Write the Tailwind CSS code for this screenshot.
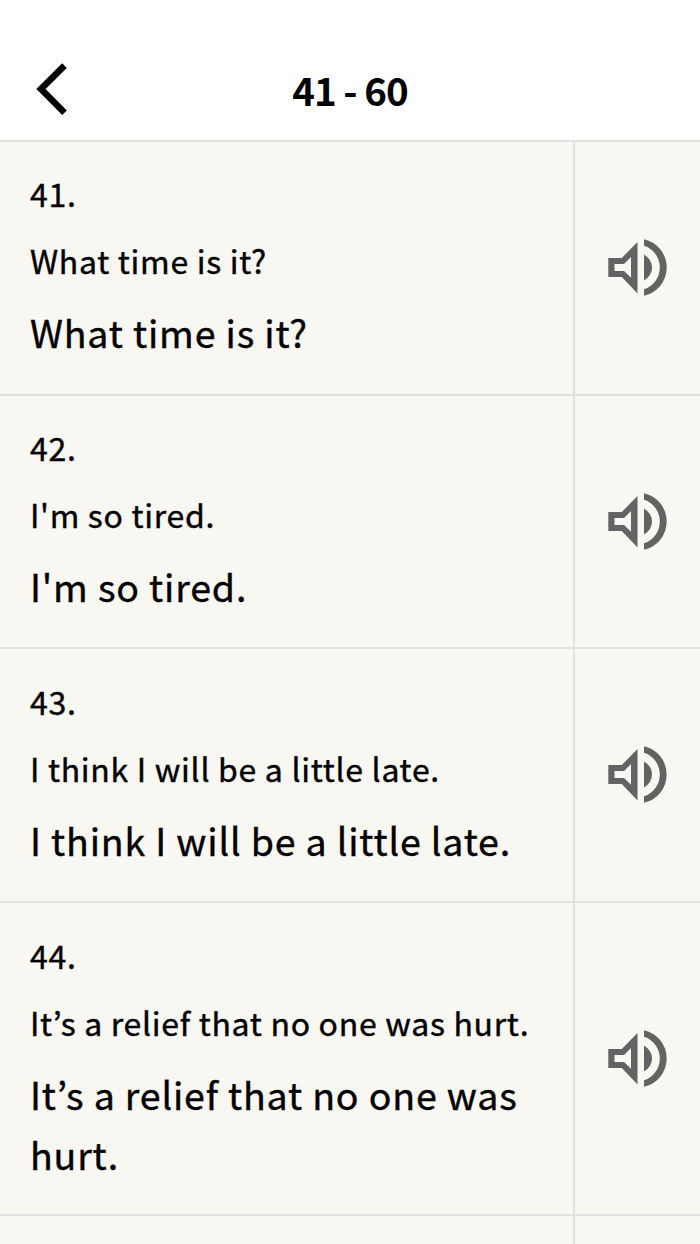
<!DOCTYPE html>
<html lang="en">
<head>
    <meta charset="UTF-8">
    <meta name="viewport" content="width=device-width, initial-scale=1.0">
    <title>41 - 60</title>
    <script src="https://cdn.jsdelivr.net/npm/@tailwindcss/browser@4"></script>
</head>
<body class="h-[1244px] flex flex-col overflow-hidden bg-[#f8f7f2] text-black font-['Noto_Sans_CJK_KR','Noto_Sans_CJK_JP',sans-serif]">
<svg class="hidden">
    <symbol id="speaker" viewBox="0 0 60 58">
        <path fill-rule="evenodd" d="M0.3 19H13.8L29.5 3V54.5L13.8 38H0.3ZM6.5 25V32H16L23 38.7V18L16 25Z"/>
        <path d="M36 15.5Q44 20.5 44 28.5T36 41.5Z"/>
        <path d="M36 0.2A29 29 0 0 1 36 56.8V50.2A22.8 22.8 0 0 0 36 6.8Z"/>
    </symbol>
</svg>
<!-- Header -->
<header class="h-[142px] shrink-0 bg-white border-b-2 border-[#e1e1e1] pt-[38px] grid grid-cols-3 items-center">
    <button class="pl-9" aria-label="Back">
        <svg class="w-8 h-[54px]" viewBox="0 0 32 54" fill="none" stroke="black" stroke-width="6.6">
            <path d="M28.5 3.7L5 27L28.5 50.8"/>
        </svg>
    </button>
    <h1 class="text-center text-[38.5px] leading-[58px] font-bold tracking-[-1px] whitespace-nowrap">41 - 60</h1>
</header>
<!-- Sentences -->
<main class="flex-1 min-h-0 flex flex-col [-webkit-text-stroke:0.4px_black]">
    <section class="flex shrink-0 h-[253.7px] border-b-2 border-[#e1e1e1]">
        <div class="w-[575px] shrink-0 border-r-2 border-[#e1e1e1] pl-[30px] pr-7 pt-[26px]">
            <p class="text-[32px] leading-[50px] tracking-[0.7px]">41.</p>
            <p class="mt-[17px] text-[32px] leading-[50px] tracking-[0.7px]">What time is it?</p>
            <p class="mt-[17px] text-[37.5px] leading-[60px] tracking-[0.84px]">What time is it?</p>
        </div>
        <button class="flex-1 flex items-center justify-center" aria-label="Play"><svg class="w-[60px] h-[58px] fill-[#636363]"><use href="#speaker"/></svg></button>
    </section>
    <section class="flex shrink-0 h-[253.7px] border-b-2 border-[#e1e1e1]">
        <div class="w-[575px] shrink-0 border-r-2 border-[#e1e1e1] pl-[30px] pr-7 pt-[26px]">
            <p class="text-[32px] leading-[50px] tracking-[0.7px]">42.</p>
            <p class="mt-[17px] text-[32px] leading-[50px] tracking-[0.7px]">I'm so tired.</p>
            <p class="mt-[17px] text-[37.5px] leading-[60px] tracking-[0.84px]">I'm so tired.</p>
        </div>
        <button class="flex-1 flex items-center justify-center" aria-label="Play"><svg class="w-[60px] h-[58px] fill-[#636363]"><use href="#speaker"/></svg></button>
    </section>
    <section class="flex shrink-0 h-[253.7px] border-b-2 border-[#e1e1e1]">
        <div class="w-[575px] shrink-0 border-r-2 border-[#e1e1e1] pl-[30px] pr-7 pt-[26.5px]">
            <p class="text-[32px] leading-[50px] tracking-[0.7px]">43.</p>
            <p class="mt-[17px] text-[32px] leading-[50px] tracking-[0.7px]">I think I will be a little late.</p>
            <p class="mt-[17px] text-[37.5px] leading-[60px] tracking-[0.84px]">I think I will be a little late.</p>
        </div>
        <button class="flex-1 flex items-center justify-center" aria-label="Play"><svg class="w-[60px] h-[58px] fill-[#636363]"><use href="#speaker"/></svg></button>
    </section>
    <section class="flex shrink-0 h-[313.4px] border-b-2 border-[#e1e1e1]">
        <div class="w-[575px] shrink-0 border-r-2 border-[#e1e1e1] pl-[30px] pr-7 pt-[26.5px]">
            <p class="text-[32px] leading-[50px] tracking-[0.7px]">44.</p>
            <p class="mt-[17px] text-[32px] leading-[50px] tracking-[0.7px] whitespace-nowrap">It’s a relief that no one was hurt.</p>
            <p class="mt-[17px] text-[37.5px] leading-[60px] tracking-[0.84px]">It’s a relief that no one was<br>hurt.</p>
        </div>
        <button class="flex-1 flex items-center justify-center" aria-label="Play"><svg class="w-[60px] h-[58px] fill-[#636363]"><use href="#speaker"/></svg></button>
    </section>
    <section class="flex flex-1">
        <div class="w-[575px] shrink-0 border-r-2 border-[#e1e1e1]"></div>
    </section>
</main>
</body>
</html>
